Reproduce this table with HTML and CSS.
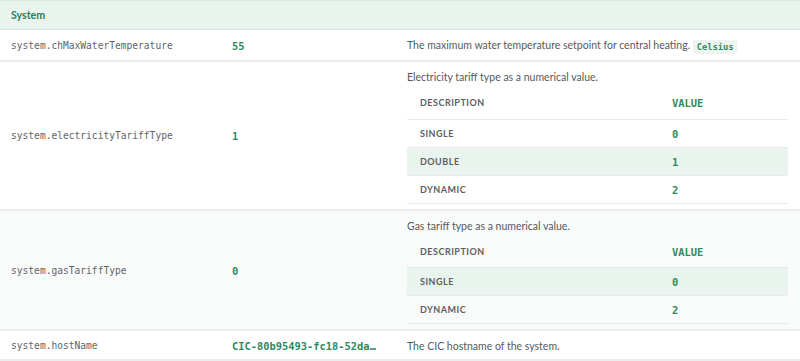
FILE: index.html
```html
<!DOCTYPE html>
<html>
<head>
<meta charset="utf-8">
<link rel="stylesheet" href="styles.css">
</head>
<body>
<table class="props">
  <colgroup><col class="c-key"><col class="c-val"><col></colgroup>
  <thead>
    <tr class="group"><th colspan="3">System</th></tr>
  </thead>
  <tbody>
    <tr>
      <td class="key">system.chMaxWaterTemperature</td>
      <td class="val">55</td>
      <td class="desc">The maximum water temperature setpoint for central heating. <code class="unit">Celsius</code></td>
    </tr>
    <tr>
      <td class="key">system.electricityTariffType</td>
      <td class="val">1</td>
      <td class="desc has-enum">
        <p class="text">Electricity tariff type as a numerical value.</p>
        <table class="enum">
          <colgroup><col class="e-desc"><col></colgroup>
          <thead><tr><th class="eh">Description</th><th class="ev">Value</th></tr></thead>
          <tbody>
            <tr><td class="ed">Single</td><td class="evv">0</td></tr>
            <tr class="hl"><td class="ed">Double</td><td class="evv">1</td></tr>
            <tr><td class="ed">Dynamic</td><td class="evv">2</td></tr>
          </tbody>
        </table>
      </td>
    </tr>
    <tr class="alt">
      <td class="key">system.gasTariffType</td>
      <td class="val">0</td>
      <td class="desc has-enum">
        <p class="text">Gas tariff type as a numerical value.</p>
        <table class="enum">
          <colgroup><col class="e-desc"><col></colgroup>
          <thead><tr><th class="eh">Description</th><th class="ev">Value</th></tr></thead>
          <tbody>
            <tr class="hl"><td class="ed">Single</td><td class="evv">0</td></tr>
            <tr><td class="ed">Dynamic</td><td class="evv">2</td></tr>
          </tbody>
        </table>
      </td>
    </tr>
    <tr>
      <td class="key">system.hostName</td>
      <td class="val">CIC-80b95493-fc18-52da…</td>
      <td class="desc">The CIC hostname of the system.</td>
    </tr>
  </tbody>
</table>
</body>
</html>
```
FILE: styles.css
```css
html, body {
  margin: 0;
  padding: 0;
  background: #ffffff;
}
body {
  font-family: Lato, "Open Sans", sans-serif;
  font-size: 10.5px;
  color: #555a5c;
}
.props {
  width: 100%;
  border-collapse: collapse;
  table-layout: fixed;
}
.c-key { width: 220px; }
.c-val { width: 175px; }
.group th {
  background: #e9f4ef;
  border-top: 1px solid #d7ebe2;
  border-bottom: 1px solid #cfe5db;
  color: #2b7d58;
  font-weight: 700;
  font-size: 10.6px;
  text-align: left;
  padding: 7px 11px 6px;
  line-height: 15px;
}
.props > tbody > tr > td {
  border-bottom: 2px solid #ececec;
  padding: 8px 12px 6px;
  line-height: 14px;
}
.props > tbody > tr > td.has-enum {
  padding-bottom: 4.5px;
}
.props > tbody > tr.alt > td {
  background: #f9fafa;
}
.key {
  font-family: "DejaVu Sans Mono", monospace;
  font-size: 9.6px;
  color: #5f6466;
  padding-left: 11px !important;
  vertical-align: middle;
}
.val {
  vertical-align: middle;
  font-family: "DejaVu Sans Mono", monospace;
  font-weight: 700;
  font-size: 10.4px;
  color: #2e8a62;
  white-space: nowrap;
}
.desc {
  vertical-align: top;
}
.text {
  margin: 0 0 5px;
}
.unit {
  display: inline-block;
  font-family: "DejaVu Sans Mono", monospace;
  font-weight: 700;
  font-size: 8.7px;
  color: #2e8a62;
  background: #edf5f1;
  border-radius: 3px;
  padding: 1px 4px 1px;
  line-height: 12px;
  vertical-align: -1px;
}
.enum {
  width: 100%;
  border-collapse: collapse;
  table-layout: fixed;
}
.e-desc { width: 252px; }
.enum th, .enum td {
  text-align: left;
  padding: 7px 13px 6.2px;
  line-height: 14px;
  border-bottom: 1px solid #e8eaea;
}
.enum th {
  padding-bottom: 8.5px;
}
.enum .eh,
.enum .ed {
  font-size: 9px;
  font-weight: 700;
  letter-spacing: 0.5px;
  text-transform: uppercase;
  color: #5b6063;
}
.enum .ev {
  font-family: "DejaVu Sans Mono", monospace;
  font-size: 10.4px;
  font-weight: 700;
  text-transform: uppercase;
  color: #2e8a62;
}
.enum .evv {
  font-family: "DejaVu Sans Mono", monospace;
  font-size: 10.4px;
  font-weight: 700;
  color: #2e8a62;
}
.enum tr.hl td {
  background: #e9f4ef;
}
```
